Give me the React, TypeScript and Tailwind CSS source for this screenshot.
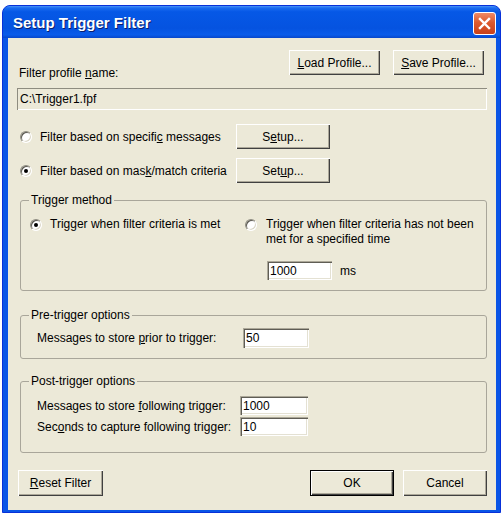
import type { ReactNode } from 'react';

// Classic raised push button
function Button({ children, className = '', isDefault = false }: { children: ReactNode; className?: string; isDefault?: boolean }) {
    return (
        <button
            className={`h-full flex items-center justify-center bg-[#ECE9D8] text-[12px] text-black ${
                isDefault
                    ? 'border border-black shadow-[inset_1px_1px_#fff,inset_-1px_-1px_#404040,inset_-2px_-2px_#ACA899]'
                    : 'shadow-[inset_1px_1px_#fff,inset_-1px_-1px_#404040,inset_-2px_-2px_#ACA899]'
            } ${className}`}
        >
            {children}
        </button>
    );
}

function Radio({ checked = false }: { checked?: boolean }) {
    return (
        <span className="shrink-0 flex items-center justify-center w-[12px] h-[12px] rounded-full bg-white border border-t-[#8E8C80] border-l-[#8E8C80] border-b-white border-r-white shadow-[inset_1px_1px_#5A5850,inset_-1px_-1px_#DAD6C6]">
            {checked && <span className="w-[4px] h-[4px] rounded-full bg-black" />}
        </span>
    );
}

function Field({ value, className = '' }: { value: string; className?: string }) {
    return (
        <div
            className={`flex items-center pl-[3px] bg-white text-[12px] shadow-[inset_1px_1px_#ACA899,inset_2px_2px_#5F5D55,inset_-1px_-1px_#fff,inset_-2px_-2px_#E4E1D3] ${className}`}
        >
            {value}
        </div>
    );
}

function Group({ title, className = '', children }: { title: string; className?: string; children: ReactNode }) {
    return (
        <fieldset className={`ml-[3px] border border-[#A9A69A] rounded-[3px] ${className}`}>
            <legend className="ml-[8px] px-[2px] text-[12px] leading-[14px]">{title}</legend>
            {children}
        </fieldset>
    );
}

export default function App() {
    return (
        <div className="w-[504px] h-[525px] bg-white pt-[5px] pl-[2px] font-['Liberation_Sans',Arial,sans-serif] text-black">
            {/* Window frame */}
            <div className="w-[499px] flex flex-col rounded-t-[8px] bg-[#0A55E6] border border-[#0831D9] pl-[5px] pr-[4px] pb-[2px]">
                {/* Title bar */}
                <div className="-ml-[5px] -mr-[4px] h-[32px] flex items-center justify-between rounded-t-[7px] pl-[10px] pr-[4px] bg-[linear-gradient(to_bottom,#4A95F8_0%,#1B6CF0_6%,#0658E6_18%,#0553E0_70%,#0A5CEA_90%,#0847CA_100%)]">
                    <span className="text-white font-bold text-[15px] leading-[17px] mt-[1px] [text-shadow:1px_1px_#0A1E6E]">
                        Setup Trigger Filter
                    </span>
                    <div className="mt-[2px] w-[23px] h-[23px] rounded-[3px] border border-white flex items-center justify-center bg-[linear-gradient(to_bottom,#EE8A66_0%,#DC5A2E_45%,#C9411A_100%)]">
                        <svg width="13" height="13" viewBox="0 0 13 13">
                            <path d="M2 2 L11 11 M11 2 L2 11" stroke="#fff" strokeWidth="2.4" strokeLinecap="square" />
                        </svg>
                    </div>
                </div>

                {/* Client area */}
                <div className="bg-[#ECE9D8] h-[472px] flex flex-col pt-[12px] pl-[9px] pr-[9px] text-[12px]">
                    <div className="h-[25px] flex justify-between">
                        <span className="ml-[2px] pt-[16px] leading-[14px]">
                            Filter profile <u>n</u>ame:
                        </span>
                        <div className="flex gap-[13px] mr-[3px]">
                            <Button className="w-[91px]">
                                <u>L</u>oad Profile...
                            </Button>
                            <Button className="w-[91px]">
                                <u>S</u>ave Profile...
                            </Button>
                        </div>
                    </div>

                    <div className="mt-[13px] h-[22px] flex items-center pl-[3px] bg-[#ECE9D8] shadow-[inset_1px_1px_#8E8C80,inset_-1px_-1px_#fff]">
                        C:\Trigger1.fpf
                    </div>

                    <div className="mt-[14px] h-[25px] flex items-center">
                        <div className="w-[219px] flex items-center gap-[8px] pl-[3px]">
                            <Radio />
                            <span>
                                Filter based on specifi<u>c</u> messages
                            </span>
                        </div>
                        <Button className="w-[94px]">
                            S<u>e</u>tup...
                        </Button>
                    </div>

                    <div className="mt-[9px] h-[25px] flex items-center">
                        <div className="w-[219px] flex items-center gap-[8px] pl-[3px]">
                            <Radio checked />
                            <span>
                                Filter based on mas<u>k</u>/match criteria
                            </span>
                        </div>
                        <Button className="w-[94px]">
                            Set<u>u</u>p...
                        </Button>
                    </div>

                    <Group title="Trigger method" className="mt-[10px] pt-[10px] pb-[10px]">
                        <div className="flex">
                            <div className="w-[224px] pl-[9px] h-[15px] flex items-center gap-[8px]">
                                <Radio checked />
                                <span className="leading-[15px]">Trigger when filter criteria is met</span>
                            </div>
                            <div className="flex flex-col">
                                <div className="flex gap-[9px]">
                                    <div className="h-[15px] flex items-center">
                                        <Radio />
                                    </div>
                                    <span className="leading-[15px]">
                                        Trigger when filter criteria has not been
                                        <br />
                                        met for a specified time
                                    </span>
                                </div>
                                <div className="mt-[14px] ml-[22px] flex items-center gap-[8px]">
                                    <Field value="1000" className="w-[65px] h-[19px]" />
                                    <span>ms</span>
                                </div>
                            </div>
                        </div>
                    </Group>

                    <Group title="Pre-trigger options" className="mt-[17px] pt-[6px] pb-[10px]">
                        <div className="flex items-center pl-[16px]">
                            <span className="w-[206px]">
                                Messages to store <u>p</u>rior to trigger:
                            </span>
                            <Field value="50" className="w-[66px] h-[20px]" />
                        </div>
                    </Group>

                    <Group title="Post-trigger options" className="mt-[15px] pt-[8px] pb-[16px]">
                        <div className="flex flex-col gap-[2px] pl-[16px]">
                            <div className="flex items-center">
                                <span className="w-[203px]">
                                    Messages to store <u>f</u>ollowing trigger:
                                </span>
                                <Field value="1000" className="w-[68px] h-[19px]" />
                            </div>
                            <div className="flex items-center">
                                <span className="w-[203px]">
                                    Sec<u>o</u>nds to capture following trigger:
                                </span>
                                <Field value="10" className="w-[68px] h-[19px]" />
                            </div>
                        </div>
                    </Group>

                    <div className="mt-[17px] h-[26px] flex justify-between">
                        <Button className="ml-[1px] w-[85px]">
                            <u>R</u>eset Filter
                        </Button>
                        <div className="flex gap-[9px]">
                            <Button isDefault className="w-[84px]">
                                OK
                            </Button>
                            <Button className="w-[84px]">Cancel</Button>
                        </div>
                    </div>
                </div>
            </div>
        </div>
    );
}
